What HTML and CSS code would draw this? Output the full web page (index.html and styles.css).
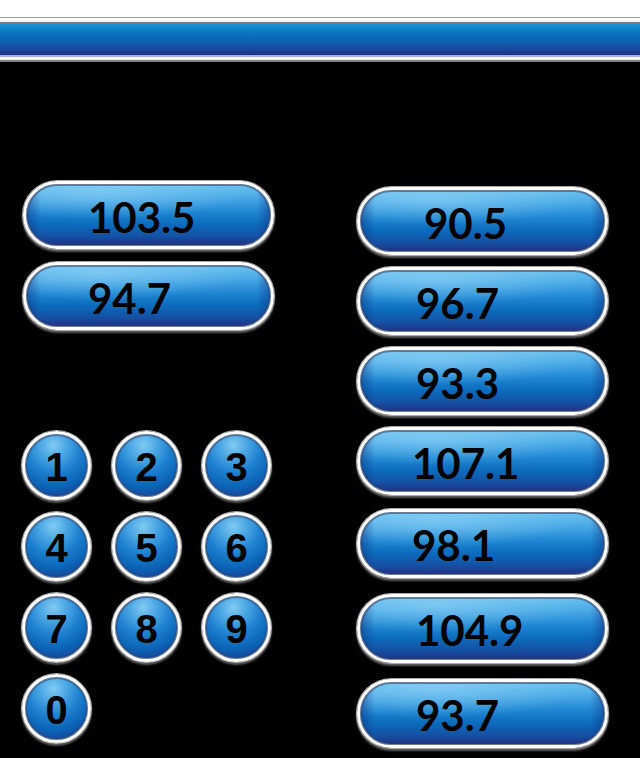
FILE: index.html
```html
<!DOCTYPE html>
<html lang="en">
<head>
<meta charset="utf-8">
<title>Radio Presets</title>
<link rel="stylesheet" href="styles.css">
</head>
<body>
<header class="header">
  <div class="header-gap"></div>
  <div class="header-bar"></div>
  <div class="header-foot"></div>
</header>
<main class="main">
  <section class="left">
    <div class="pill-list pill-list--left">
      <div class="pill pill--l">103.5</div>
      <div class="pill pill--l">94.7</div>
    </div>
    <div class="keypad">
      <div class="key">1</div>
      <div class="key">2</div>
      <div class="key">3</div>
      <div class="key">4</div>
      <div class="key">5</div>
      <div class="key">6</div>
      <div class="key">7</div>
      <div class="key">8</div>
      <div class="key">9</div>
      <div class="key">0</div>
    </div>
  </section>
  <section class="right">
    <div class="pill-list pill-list--right">
      <div class="pill pill--wide">90.5</div>
      <div class="pill">96.7</div>
      <div class="pill">93.3</div>
      <div class="pill pill--narrow">107.1</div>
      <div class="pill pill--narrow pill--gap2">98.1</div>
      <div class="pill pill--gap5">104.9</div>
      <div class="pill pill--gap5">93.7</div>
    </div>
  </section>
</main>
</body>
</html>
```

FILE: styles.css
```css
html, body {
  margin: 0;
  padding: 0;
  background: #000;
}
body {
  width: 640px;
  height: 758px;
  overflow: hidden;
}

.header {
  background: #fff;
  padding-top: 17px;
}
.header-gap {
  border-top: 1px solid #9ea2c2;
  height: 4px;
  background: linear-gradient(#ffffff, #f2f2f4);
}
.header-bar {
  height: 31px;
  border-top: 2px solid #7c7c7c;
  border-bottom: 2px solid #a9b1d6;
  background: linear-gradient(#1a92d2 0%, #0a78c2 25%, #0b62b0 55%, #164a9c 80%, #1f3385 100%);
}
.header-foot {
  height: 3px;
  background: linear-gradient(#ffffff, #e8e8ea);
  border-bottom: 2px solid #808080;
}

.main {
  display: flex;
  align-items: flex-start;
}

.left {
  padding-left: 23px;
  padding-top: 119px;
  width: 251px;
}
.right {
  margin-left: 83px;
  padding-top: 125px;
}

.pill-list {
  display: flex;
  flex-direction: column;
}
.pill-list--left { gap: 13px; }
.pill-list--right { gap: 12px; }

.pill, .key {
  box-sizing: border-box;
  border: 3px solid #fff;
  color: #000;
  font-weight: 700;
  box-shadow:
    0 0 0 1px #a8a8a8,
    0 2px 2px 1px rgba(170, 170, 170, 0.55),
    inset 0 0 0 1px #6d7d93,
    inset 0 0 0 2px rgba(40, 60, 110, 0.55);
}

.pill {
  display: flex;
  align-items: center;
  width: 251px;
  height: 68px;
  border-radius: 34px;
  padding: 3px 0 0 56px;
  font-family: Lato, "Open Sans", sans-serif;
  font-size: 42px;
  line-height: 1;
  background:
    linear-gradient(90deg, rgba(12, 40, 120, 0.45) 0%, rgba(12, 40, 120, 0) 6%, rgba(12, 40, 120, 0) 94%, rgba(12, 40, 120, 0.45) 100%),
    radial-gradient(ellipse 60% 45% at 30% 12%, rgba(150, 215, 248, 0.55), rgba(150, 215, 248, 0) 100%),
    linear-gradient(#6cc3ef 0%, #4aa9e6 22%, #1f87d3 45%, #0c6cbd 65%, #1550a3 85%, #212e82 100%);
}
.pill--l { padding-left: 62px; }
.pill--wide { padding-left: 64px; }
.pill--narrow { padding-left: 52px; }
.pill--gap2 { margin-top: 2px; height: 69px; }
.pill--gap5 { margin-top: 4px; height: 69px; }

.keypad {
  margin-top: 101px;
  margin-left: -1px;
  display: grid;
  grid-template-columns: repeat(3, 69px);
  column-gap: 21px;
  row-gap: 12px;
}
.key {
  display: flex;
  align-items: center;
  justify-content: center;
  width: 69px;
  height: 69px;
  border-radius: 50%;
  padding: 2px 0 0;
  font-family: "Liberation Sans", Arial, sans-serif;
  font-size: 40px;
  line-height: 1;
  background:
    radial-gradient(circle at 45% 18%, #80cbf2 0%, #4aa6e4 22%, #1c7fcf 45%, #0b63b5 68%, #1a3f96 88%, #222c80 100%);
}
```
